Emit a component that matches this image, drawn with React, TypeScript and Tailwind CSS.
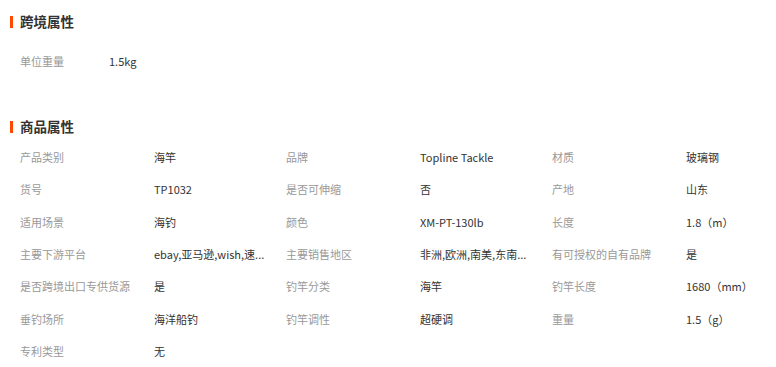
const font = {
  fontFamily: '"Noto Sans CJK SC", "Noto Sans", sans-serif',
};

const crossBorder = [{ label: "单位重量", value: "1.5kg" }];

// 长文本按参考图里已截断的样子显示
const attrs = [
  { label: "产品类别", value: "海竿" },
  { label: "品牌", value: "Topline Tackle" },
  { label: "材质", value: "玻璃钢" },
  { label: "货号", value: "TP1032" },
  { label: "是否可伸缩", value: "否" },
  { label: "产地", value: "山东" },
  { label: "适用场景", value: "海钓" },
  { label: "颜色", value: "XM-PT-130lb" },
  { label: "长度", value: "1.8（m）" },
  { label: "主要下游平台", value: "ebay,亚马逊,wish,速..." },
  { label: "主要销售地区", value: "非洲,欧洲,南美,东南..." },
  { label: "有可授权的自有品牌", value: "是" },
  { label: "是否跨境出口专供货源", value: "是" },
  { label: "钓竿分类", value: "海竿" },
  { label: "钓竿长度", value: "1680（mm）" },
  { label: "垂钓场所", value: "海洋船钓" },
  { label: "钓竿调性", value: "超硬调" },
  { label: "重量", value: "1.5（g）" },
  { label: "专利类型", value: "无" },
];

const SectionTitle = ({ title }: { title: string }) => (
  <div className="flex items-center h-[22px] pl-[10px]">
    <span className="w-[3px] h-[12px] bg-[#ff4a00]" />
    <h2 className="ml-[7px] text-[13.5px] font-bold text-[#333] leading-none">
      {title}
    </h2>
  </div>
);

export default function App() {
  return (
    <div className="w-[776px] h-[367px] overflow-hidden bg-white" style={font}>
      {/* 跨境属性 */}
      <div className="pt-[11px]">
        <SectionTitle title="跨境属性" />
        <div className="mt-[16px] pl-[20px]">
          {crossBorder.map((item) => (
            <div key={item.label} className="flex items-center h-[24px] text-[11px]">
              <span className="w-[89px] text-[#999]">{item.label}</span>
              <span className="text-[#333]">{item.value}</span>
            </div>
          ))}
        </div>
      </div>

      {/* 商品属性 */}
      <div className="mt-[43px]">
        <SectionTitle title="商品属性" />
        <div className="mt-[3px] pl-[20px] grid grid-cols-[134px_132px_134px_132px_134px_132px] auto-rows-[32.33px] items-center text-[11px]">
          {attrs.map((item) => (
            <div key={item.label} className="contents">
              <span className="text-[#999] whitespace-nowrap">{item.label}</span>
              <span className="text-[#333] whitespace-nowrap">{item.value}</span>
            </div>
          ))}
        </div>
      </div>
    </div>
  );
}
